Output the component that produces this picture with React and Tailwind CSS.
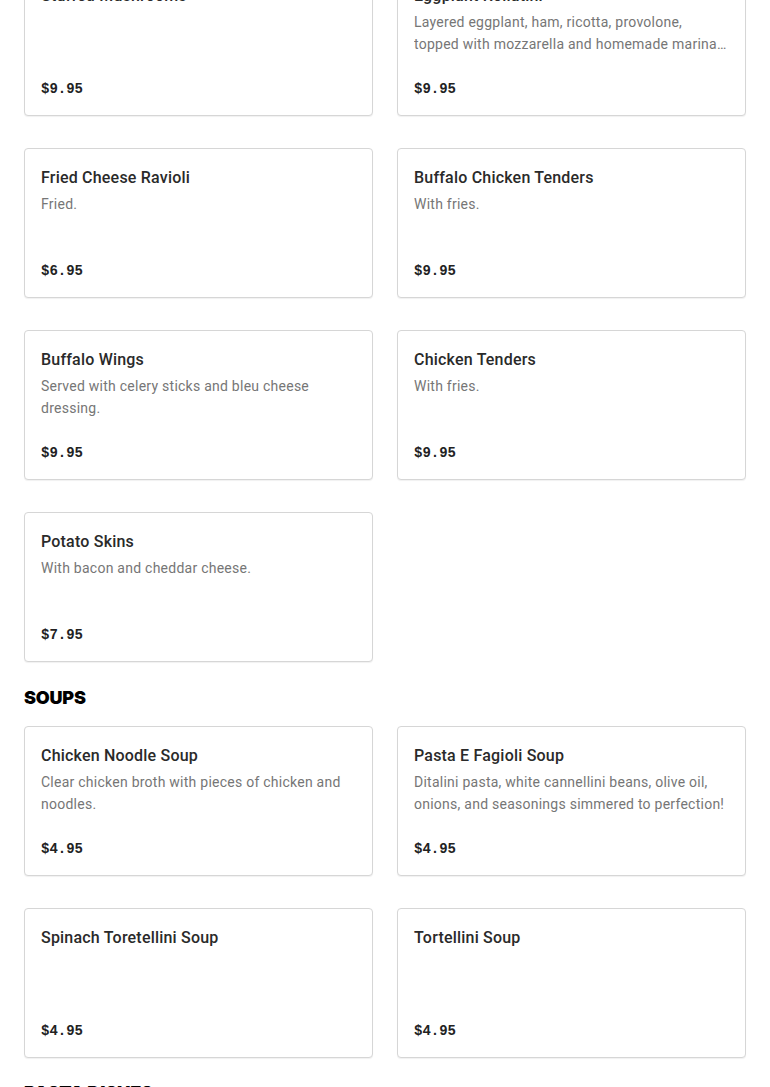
const appetizers = [
  { name: "Stuffed Mushrooms", desc: "", price: "$9.95" },
  { name: "Eggplant Rollatini", lines: ["Layered eggplant, ham, ricotta, provolone,", "topped with mozzarella and homemade marinara sauce."], price: "$9.95" },
  { name: "Fried Cheese Ravioli", desc: "Fried.", price: "$6.95" },
  { name: "Buffalo Chicken Tenders", desc: "With fries.", price: "$9.95" },
  { name: "Buffalo Wings", desc: "Served with celery sticks and bleu cheese dressing.", price: "$9.95" },
  { name: "Chicken Tenders", desc: "With fries.", price: "$9.95" },
  { name: "Potato Skins", desc: "With bacon and cheddar cheese.", price: "$7.95" },
];

const soups = [
  { name: "Chicken Noodle Soup", desc: "Clear chicken broth with pieces of chicken and noodles.", price: "$4.95" },
  { name: "Pasta E Fagioli Soup", desc: "Ditalini pasta, white cannellini beans, olive oil, onions, and seasonings simmered to perfection!", price: "$4.95" },
  { name: "Spinach Toretellini Soup", desc: "", price: "$4.95" },
  { name: "Tortellini Soup", desc: "", price: "$4.95" },
];

function Card({ item }) {
  return (
    <div className="h-[150px] flex flex-col border border-[#d6d6d6] rounded-[4px] bg-white px-4 pt-[17px] pb-[14px] shadow-[0_1px_1px_rgba(0,0,0,0.06)]">
      <div className="text-[16px] leading-6 font-medium text-[#2a2a2a] tracking-[0.2px]">{item.name}</div>
      {item.lines ? (
        <div className="mt-[3px] text-[14px] leading-[22px] text-[#767676] tracking-[0.25px]">
          <div className="truncate">{item.lines[0]}</div>
          <div className="truncate">{item.lines[1]}</div>
        </div>
      ) : item.desc ? (
        <div className="mt-[3px] text-[14px] leading-[22px] text-[#767676] tracking-[0.25px] line-clamp-2">{item.desc}</div>
      ) : null}
      <div className="mt-auto text-[14px] leading-6 font-bold text-[#222] [font-family:'Liberation_Mono',monospace]">{item.price}</div>
    </div>
  );
}

export default function App() {
  return (
    <div className="bg-white min-h-[1087px] overflow-hidden [font-family:Roboto,'Noto_Sans',sans-serif]">
      <div className="px-6 -mt-[34px]">
        <div className="grid grid-cols-2 gap-x-6 gap-y-8">
          {appetizers.map((it) => (
            <Card key={it.name} item={it} />
          ))}
        </div>
        <h2 className="mt-6 mb-4 text-[18px] leading-6 font-black text-black tracking-[-0.2px] [font-family:Inter,sans-serif]">SOUPS</h2>
        <div className="grid grid-cols-2 gap-x-6 gap-y-8">
          {soups.map((it) => (
            <Card key={it.name} item={it} />
          ))}
        </div>
        <h2 className="mt-[23px] mb-4 text-[18px] leading-6 font-black text-black tracking-[-0.2px] [font-family:Inter,sans-serif]">PASTA DISHES</h2>
      </div>
    </div>
  );
}
